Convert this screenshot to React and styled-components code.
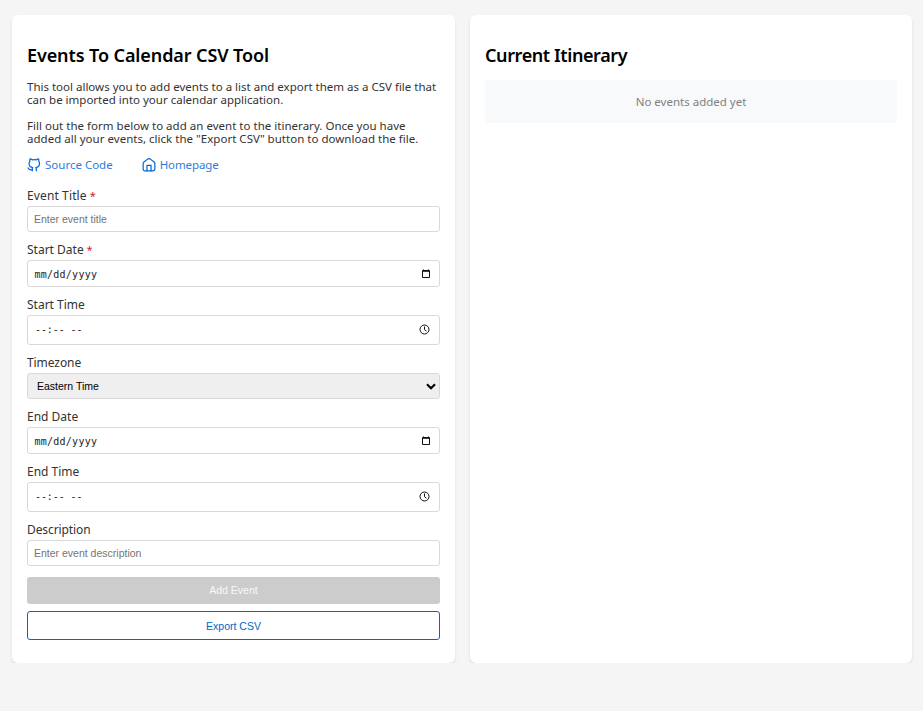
import React from 'react';
import styled, { createGlobalStyle } from 'styled-components';

const GlobalStyle = createGlobalStyle`
  * { box-sizing: border-box; }
  body {
    margin: 0;
    background: #f5f5f5;
    color: #333;
    font-family: "Noto Sans", sans-serif;
    font-size: 12px;
  }
`;

const Page = styled.main`
  display: grid;
  grid-template-columns: 443px 442px;
  gap: 15px;
  height: 663px;
  padding: 15px 11px 0 12px;
`;

const Panel = styled.section`
  display: flex;
  flex-direction: column;
  padding: 27px 15px 0;
  background: #fff;
  border-radius: 6px;
  box-shadow: 0 2px 3px rgba(0, 0, 0, 0.1);
`;

const Heading = styled.h2`
  margin: 0;
  height: 26px;
  line-height: 26px;
  color: #000;
  font-size: 18px;
  font-weight: 600;
  letter-spacing: ${(p) => p.$tracking};
  white-space: nowrap;
`;

const Paragraph = styled.p`
  margin: ${(p) => p.$top} 0 0;
  font-size: 11.5px;
  line-height: 13px;
  letter-spacing: ${(p) => p.$tracking};
  white-space: nowrap;
`;

const Links = styled.nav`
  display: flex;
  gap: 29px;
  height: 16px;
  margin-top: 12px;
`;

const Link = styled.a`
  display: flex;
  align-items: center;
  gap: 4px;
  color: #0366d6;
  font-size: 11.5px;
  letter-spacing: ${(p) => p.$tracking};
  line-height: 16px;
  text-decoration: none;
  white-space: nowrap;

  span { opacity: 0.85; }
`;

const LineIcon = styled.svg`
  width: 14px;
  height: 14px;
  fill: none;
  stroke: currentColor;
  stroke-width: 2.1;
  stroke-linecap: round;
  stroke-linejoin: round;
  overflow: visible;
`;

const Form = styled.form`
  display: flex;
  flex-direction: column;
  gap: 11px;
  margin-top: 16px;
`;

const Field = styled.div`
  display: flex;
  flex-direction: column;
  gap: 3px;
`;

const Label = styled.label`
  height: 14px;
  line-height: 14px;
  letter-spacing: ${(p) => p.$tracking || '0'};
`;

const Required = styled.span`
  color: #cb2431;
  font-size: 11px;
`;

const TextInput = styled.input`
  height: 26px;
  padding: 0 6px;
  border: 1px solid #d9d9d9;
  border-radius: 3px;
  background: #fff;
  font: 10.5px "Liberation Sans", sans-serif;

  &::placeholder { color: #757575; }
`;

const PickerBox = styled.div`
  display: flex;
  align-items: center;
  justify-content: space-between;
  height: ${(p) => p.$height};
  padding: ${(p) => p.$padding};
  border: 1px solid #d9d9d9;
  border-radius: 3px;
  color: #222;
  font: 10px "DejaVu Sans Mono", monospace;
  letter-spacing: ${(p) => p.$tracking};
  white-space: pre;
`;

const PickerIcon = styled.svg`
  width: ${(p) => p.$width};
  height: ${(p) => p.$height};
  fill: none;
  stroke: #111;
`;

const SelectBox = styled.div`
  display: flex;
  align-items: center;
  justify-content: space-between;
  height: 26px;
  padding: 0 3px 0 9px;
  border: 1px solid #d9d9d9;
  border-radius: 3px;
  background: #efefef;
  color: #000;
  font: 10.5px "Liberation Sans", sans-serif;
`;

const Chevron = styled.svg`
  width: 10px;
  height: 7px;
  fill: none;
  stroke: #000;
  stroke-width: 2.1;
`;

const Button = styled.button`
  height: ${(p) => (p.$outline ? '29px' : '27px')};
  margin-top: ${(p) => (p.$outline ? '-4px' : '0')};
  padding: ${(p) => (p.$outline ? '0' : '0 0 1px')};
  border: ${(p) => (p.$outline ? '1px solid #0366c6' : '0')};
  border-radius: 3px;
  background: ${(p) => (p.$outline ? '#fff' : '#ccc')};
  color: ${(p) => (p.$outline ? '#0366c6' : '#f8f8f8')};
  font: 10.5px "Liberation Sans", sans-serif;
`;

const EmptyState = styled.div`
  height: 43px;
  margin-top: 12px;
  border-radius: 3px;
  background: #f8f9fb;
  color: #808080;
  font-size: 11.5px;
  line-height: 44px;
  text-align: center;
`;

function GithubIcon() {
  return (
    <LineIcon viewBox="0 0 24 24">
      <path d="M16 22v-3.1a3.4 3.4 0 0 0-.9-2.6c3.2-.4 6.4-1.6 6.4-7a5.4 5.4 0 0 0-1.5-3.8 5 5 0 0 0-.1-3.8s-1.2-.4-3.9 1.5a13.400 13.400 0 0 0-7 0C6.300 1.300 5.100 1.700 5.100 1.700a5 5 0 0 0-.1 3.800 5.400 5.400 0 0 0-1.500 3.800c0 5.400 3.200 6.600 6.400 7a3.400 3.400 0 0 0-.9 2.600V22" />
      <path d="M9 20c-3 1-5.500 0-7-3" />
    </LineIcon>
  );
}

function HomeIcon() {
  return (
    <LineIcon viewBox="0 0 24 24">
      <path d="M2 9.500a3 3 0 0 1 1.300-2.500l7-5.500a3 3 0 0 1 3.400 0l7 5.500A3 3 0 0 1 22 9.500V19a3 3 0 0 1-3 3H5a3 3 0 0 1-3-3Z" />
      <path d="M8.500 22v-9.500h7V22" />
    </LineIcon>
  );
}

function DateField({ label, required }) {
  return (
    <Field>
      <Label>{label}{required && <Required> *</Required>}</Label>
      <PickerBox $height="27px" $padding="1px 9px 0 6.500px" $tracking="0.25px">
        <span>mm/dd/yyyy</span>
        <PickerIcon $width="8px" $height="11px" viewBox="0 0 8 11">
          <path d="M.5 1.500h7v7h-7zM.5 2.300h7M1.500 .5v1M6.500 .5v1" />
        </PickerIcon>
      </PickerBox>
    </Field>
  );
}

function TimeField({ label }) {
  return (
    <Field>
      <Label>{label}</Label>
      <PickerBox $height="30px" $padding="0 9px 1px 7px" $tracking="-0.1px">
        <span>--:-- --</span>
        <PickerIcon $width="11px" $height="11px" viewBox="0 0 11 11">
          <circle cx="5.5" cy="5.5" r="4.5" />
          <path d="M5.5 2.5v3.2l2 1.5" />
        </PickerIcon>
      </PickerBox>
    </Field>
  );
}

export default function App() {
  return (
    <>
      <GlobalStyle />
      <Page>
        <Panel>
          <Heading $tracking="-0.1px">Events To Calendar CSV Tool</Heading>
          <Paragraph $top="12px" $tracking="0">
            This tool allows you to add events to a list and export them as a CSV file that
            <br />
            can be imported into your calendar application.
          </Paragraph>
          <Paragraph $top="13px" $tracking="0.02px">
            Fill out the form below to add an event to the itinerary. Once you have
            <br />
            added all your events, click the "Export CSV" button to download the file.
          </Paragraph>
          <Links>
            <Link $tracking="0"><GithubIcon /><span>Source Code</span></Link>
            <Link $tracking="-0.1px"><HomeIcon /><span>Homepage</span></Link>
          </Links>
          <Form>
            <Field>
              <Label $tracking="0.12px">Event Title<Required> *</Required></Label>
              <TextInput placeholder="Enter event title" />
            </Field>
            <DateField label="Start Date" required />
            <TimeField label="Start Time" />
            <Field>
              <Label $tracking="-0.08px">Timezone</Label>
              <SelectBox>
                Eastern Time
                <Chevron viewBox="0 0 10 7"><path d="M1 1.2 5 5.2 9 1.2" /></Chevron>
              </SelectBox>
            </Field>
            <DateField label="End Date" />
            <TimeField label="End Time" />
            <Field>
              <Label $tracking="-0.1px">Description</Label>
              <TextInput placeholder="Enter event description" />
            </Field>
            <Button type="button" disabled>Add Event</Button>
            <Button type="button" $outline>Export CSV</Button>
          </Form>
        </Panel>
        <Panel>
          <Heading $tracking="-0.4px">Current Itinerary</Heading>
          <EmptyState>No events added yet</EmptyState>
        </Panel>
      </Page>
    </>
  );
}
